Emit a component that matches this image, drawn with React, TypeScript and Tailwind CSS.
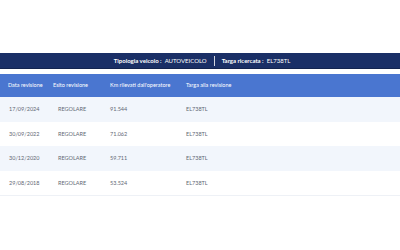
import React from 'react';

const rows = [
  { date: '17/09/2024', esito: 'REGOLARE', km: '91.544', targa: 'EL738TL' },
  { date: '30/09/2022', esito: 'REGOLARE', km: '71.062', targa: 'EL738TL' },
  { date: '30/12/2020', esito: 'REGOLARE', km: '59.711', targa: 'EL738TL' },
  { date: '29/08/2018', esito: 'REGOLARE', km: '53.524', targa: 'EL738TL' },
];

export default function App() {
  return (
    <div className="w-[400px] h-[250px] bg-white pt-[53px] font-['Lato',sans-serif]">
      <div className="h-[16px] bg-[#1a2f66] border-b border-[#13244f] flex items-center justify-center text-white text-[6px] pl-[4px]">
        <span className="font-bold">Tipologia veicolo :</span>
        <span className="ml-[3px]">AUTOVEICOLO</span>
        <span className="mx-[7px] h-[10px] w-px bg-white/80" />
        <span className="font-bold">Targa ricercata :</span>
        <span className="ml-[3px]">EL738TL</span>
      </div>
      <div className="mt-[5px]">
        <div className="h-[23px] bg-[#4a76d0] flex items-center text-white text-[5.5px]">
          <div className="w-[53px] pl-[8px]">Data revisione</div>
          <div className="w-[57px]">Esito revisione</div>
          <div className="w-[76px]">Km rilevati dall'operatore</div>
          <div className="flex-1">Targa alla revisione</div>
        </div>
        {rows.map((r, i) => (
          <div
            key={r.date}
            className={`h-[24.5px] flex items-center text-[#636874] text-[5.5px] ${i % 2 === 0 ? 'bg-[#f2f6fc]' : 'bg-white'}`}
          >
            <div className="w-[53px] pl-[9px]">{r.date}</div>
            <div className="w-[57px] pl-[5px]">{r.esito}</div>
            <div className="w-[76px]">{r.km}</div>
            <div className="flex-1">{r.targa}</div>
          </div>
        ))}
        <div className="h-px bg-[#eef1f6]" />
      </div>
    </div>
  );
}
